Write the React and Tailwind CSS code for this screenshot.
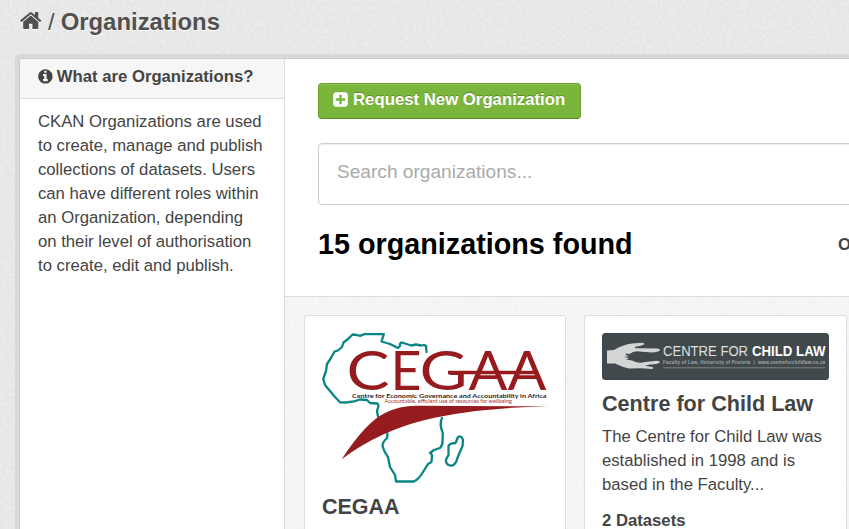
const HOME =
  "M1472 992v480q0 26-19 45t-45 19h-384v-384h-256v384h-384q-26 0-45-19t-19-45v-480q0-1 .5-3t.5-3l575-474 575 474q1 2 1 6zm223-69l-62 74q-8 9-21 11h-3q-13 0-21-7l-692-577-692 577q-12 8-24 7-13-2-21-11l-62-74q-8-10-7-23.5t11-21.5l719-599q32-26 76-26t76 26l244 204v-195q0-14 9-23t23-9h192q14 0 23 9t9 23v408l219 182q10 8 11 21.5t-7 23.5z";
const INFO =
  "M1152 1376v-160q0-14-9-23t-23-9h-96v-512q0-14-9-23t-23-9h-320q-14 0-23 9t-9 23v160q0 14 9 23t23 9h96v320h-96q-14 0-23 9t-9 23v160q0 14 9 23t23 9h448q14 0 23-9t9-23zm-128-896v-160q0-14-9-23t-23-9h-192q-14 0-23 9t-9 23v160q0 14 9 23t23 9h192q14 0 23-9t9-23zm640 416q0 209-103 385.5t-279.5 279.5-385.500 103-385.500-103-279.500-279.500-103-385.500 103-385.500 279.500-279.500 385.500-103 385.500 103 279.500 279.500 103 385.500z";
const PLUS =
  "M1408 960v-128q0-26-19-45t-45-19h-320v-320q0-26-19-45t-45-19h-128q-26 0-45 19t-19 45v320h-320q-26 0-45 19t-19 45v128q0 26 19 45t45 19h320v320q0 26 19 45t45 19h128q26 0 45-19t19-45v-320h320q26 0 45-19t19-45zm256-544v960q0 119-84.5 203.5t-203.5 84.5h-960q-119 0-203.5-84.5t-84.5-203.5v-960q0-119 84.5-203.5t203.5-84.5h960q119 0 203.5 84.5t84.5 203.5z";

function Icon({ d, className }) {
  return (
    <svg viewBox="0 0 1792 1792" fill="currentColor" className={className} aria-hidden="true">
      <path d={d} />
    </svg>
  );
}

// Fine paper grain laid under a panel's content.
function Grain({ id, light }) {
  return (
    <svg className="absolute inset-0 -z-10 h-full w-full" aria-hidden="true">
      <filter id={id} x="0" y="0" width="100%" height="100%">
        <feTurbulence type="fractalNoise" baseFrequency="0.3" numOctaves="2" seed="4" />
        <feColorMatrix values="0 0 0 0 1  0 0 0 0 1  0 0 0 0 1  0.9 0 0 0 -0.27" />
      </filter>
      <rect width="100%" height="100%" filter={`url(#${id})`} opacity={light ? 0.8 : 0.6} />
    </svg>
  );
}

const WORDMARK = [
  { letter: "C", x: 346.5, width: 43 },
  { letter: "E", x: 390.5, width: 31 },
  { letter: "G", x: 419.5, width: 48 },
  { letter: "A", x: 468.5, width: 39 },
  { letter: "A", x: 507.5, width: 39 },
];

function CegaaLogo() {
  return (
    <svg viewBox="322 333 227 150" className="block h-[150px] w-[227px]" role="img" aria-label="CEGAA">
      <g fill="none" stroke="#0b8583" strokeWidth="2.300" strokeLinejoin="round" strokeLinecap="round">
        <path d="M426.5 352L426 346Q425 344.500 421 345.500L416 344.500L411 345.500L402 342.500Q399.500 343 400 346L398 348L390 344L381.500 341.500L383.800 334.200H364.500L360 335.800L357 335L352.500 334.500L348 339L343.500 342.500L342 347L338 350.500L334.500 351.500L331 358L327 364L326 371L323.200 379L325 385L330 391L335 397L340 402.300L346 402.500L354 401.300L360 399.500L367 400L370 403L377.500 403.500L378.500 406L377 411L378 416.500" />
        <path d="M387.500 433.500L387 438Q382.500 442 382.500 446Q384 452 388 457L390 467L395 475L396 481.500L414 481.500Q419 479 423 472L428 464L431.500 462L432 455L430 453L434 450L440 448Q443 445 442.500 441L442.800 433Q439 424 442 418" />
        <path d="M458 437Q461.500 435 463 440L462.500 446L459 454L456 462Q454 466 450 465.500Q445.500 464.500 446 459.500L448.500 455L448.500 446Q450 443 455.500 443Z" />
      </g>
      <path d="M341.700 459.200Q366 422 385 413Q400 405.600 417 405.800L548.500 406.300Q475 408 427 419.500Q379 431 341.700 459.200Z" fill="#961b1f" />
      {WORDMARK.map(({ letter, x, width }) => (
        <text key={x} x={x} y="389.500" textLength={width} lengthAdjust="spacingAndGlyphs" fill="#961b1f" fontSize="55" className="font-[Lato,sans-serif]">
          {letter}
        </text>
      ))}
      <path d="M448 372.500H534" stroke="#961b1f" strokeWidth="3.400" />
      <text x="352" y="397.600" fill="#2b2426" fontSize="6.400" fontWeight="700" textLength="194.500" lengthAdjust="spacingAndGlyphs" className="font-[Lato,sans-serif]">
        Centre for Economic Governance and Accountability in Africa
      </text>
      <text x="384.500" y="402.800" fill="#a83338" fontSize="5.200" textLength="127.500" lengthAdjust="spacingAndGlyphs" className="font-[Lato,sans-serif]">
        Accountable, efficient use of resources for wellbeing
      </text>
    </svg>
  );
}

function ChildLawLogo() {
  return (
    <svg viewBox="0 0 227 47" className="block h-[47px] w-[227px]" role="img" aria-label="Centre for Child Law">
      <rect width="227" height="47" rx="3.500" fill="#41494c" />
      <path
        d="M5 17.500L12 17Q21 11.500 30 10.500L40 9.700Q43 10 42 11.500Q40 12.700 33 13.800Q32.500 15 34 15.300L55 15.500Q58.500 16 58 17.500Q56 19.200 50 19.500L40 18.800Q32 17 27.500 21L24 20.500Q22.500 21.500 24.500 22.300L27 23L22 24L27 25L24 26.500L30 27.500Q37 31 43 29L55 27.800Q58 28 58 29Q57 31 48 31.500L43 32.500L51 34.200Q52 35.500 50 36L39 35.300L27 35.500Q20 34 13 30.500L5 30.500Z"
        fill="#d4d5d5"
      />
      <g className="font-['Liberation_Sans',Arial,sans-serif]">
        <text x="61" y="23" fontSize="14" fill="#dfe1e1" textLength="85" lengthAdjust="spacingAndGlyphs">
          CENTRE FOR
        </text>
        <text x="150" y="23" fontSize="14" fontWeight="700" fill="#ffffff" textLength="73.500" lengthAdjust="spacingAndGlyphs">
          CHILD LAW
        </text>
        <text x="61" y="30.600" fontSize="4.500" fontWeight="700" fill="#a2a8aa" textLength="162" lengthAdjust="spacing" xmlSpace="preserve">
          Faculty of Law, University of Pretoria&nbsp; |&nbsp; www.centreforchildlaw.co.za
        </text>
      </g>
      <path d="M61 34.700H223.500" stroke="#697174" strokeWidth="1.500" />
    </svg>
  );
}

export default function App() {
  return (
    <div className="relative isolate h-[529px] w-[849px] overflow-hidden bg-[#e5e5e5] pl-[15px] font-['Liberation_Sans',Arial,sans-serif] text-[16.700px] leading-6 text-[#444444]">
      <Grain id="page-grain" />
      <header className="flex h-[54px] items-start gap-[6px] pl-[3.500px] pt-[7px] text-[23.900px] leading-[30px] text-[#505050] [text-shadow:0_1px_0_#fff]">
        <Icon d={HOME} className="mt-[1px] h-[25px] w-[23.500px] drop-shadow-[0_1px_0_#fff]" />
        <span>/</span>
        <h1 className="font-bold">Organizations</h1>
      </header>

      <div className="h-[520px] w-[1100px] rounded-[5px] bg-[#d9d9d9] pl-[4px] pt-[4px]">
        <div className="flex h-full rounded-tl-[3px] border border-[#cccccc] bg-white">
          <aside className="w-[265px] shrink-0 border-r border-[#dddddd]">
            <h2 className="flex h-[40px] items-start gap-[3px] rounded-tl-[2px] border-b border-[#dddddd] bg-[#f6f6f6] pl-[17px] pt-[6px] font-bold">
              <Icon d={INFO} className="mt-[3px] h-[16.800px] w-[16.800px]" />
              What are Organizations?
            </h2>
            <p className="whitespace-nowrap pl-[18px] pt-[11px]">
              CKAN Organizations are used
              <br />
              to create, manage and publish
              <br />
              collections of datasets. Users
              <br />
              can have different roles within
              <br />
              an Organization, depending
              <br />
              on their level of authorisation
              <br />
              to create, edit and publish.
            </p>
          </aside>

          <main className="flex w-[800px] shrink-0 flex-col">
            <div className="h-[238px] border-b border-[#dddddd] pl-[33px] pt-[24px]">
              <button className="flex h-[36px] w-[263px] items-start gap-[4px] rounded-[4px] border border-[#6ba02f] border-b-[#5a8a22] bg-[#7ab53c] pl-[13px] pt-[4px] font-bold text-white shadow-[inset_0_1px_0_rgba(255,255,255,0.15)] [text-shadow:0_-1px_0_rgba(0,0,0,0.25)]">
                <Icon d={PLUS} className="mt-[3px] h-[17px] w-[17px]" />
                <span className="whitespace-nowrap text-[16.750px]">Request New Organization</span>
              </button>
              <input
                placeholder="Search organizations..."
                className="mt-[24px] block h-[62px] w-[700px] rounded-[4px] border border-[#cccccc] pb-[5px] pl-[18px] text-[19.100px] shadow-[inset_0_1px_1px_rgba(0,0,0,0.075)] placeholder:text-[#aaaaaa]"
              />
              <div className="mt-[21px] flex items-center">
                <h1 className="w-[520px] whitespace-nowrap text-[28.750px] font-bold leading-9 text-black">
                  15 organizations found
                </h1>
                <span className="pt-px font-bold">Order by:</span>
              </div>
            </div>
            <section className="relative isolate flex flex-1 gap-[18px] bg-[#f3f3f3] pl-[19px] pt-[18px]">
              <Grain id="list-grain" light />
              <article className="w-[262px] rounded-[3px] border border-[#dddddd] bg-white pl-[17px] pt-[17px]">
                <CegaaLogo />
                <h3 className="mt-[9px] text-[21.500px] font-bold leading-[30px]">CEGAA</h3>
              </article>
              <article className="w-[263px] rounded-[3px] border border-[#dddddd] bg-white pl-[17px] pt-[17px]">
                <ChildLawLogo />
                <h3 className="mt-[9px] whitespace-nowrap text-[21.600px] font-bold leading-[30px]">Centre for Child Law</h3>
                <p className="mt-[6px] whitespace-nowrap">
                  The Centre for Child Law was
                  <br />
                  established in 1998 and is
                  <br />
                  based in the Faculty...
                </p>
                <strong className="mt-[12px] block">2 Datasets</strong>
              </article>
            </section>
          </main>
        </div>
      </div>
    </div>
  );
}
